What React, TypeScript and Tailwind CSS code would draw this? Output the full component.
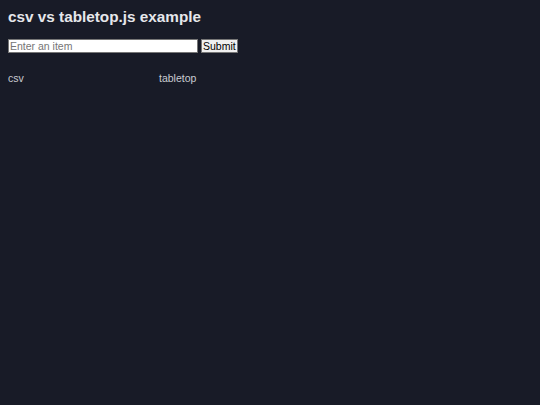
export default function App() {
  return (
    <div className="min-h-[405px] w-full bg-[#181b27] p-2 font-['Liberation_Sans',Arial,sans-serif] text-[#d4d6dc]">
      <h1 className="text-[15.3px] font-bold leading-[18px] text-[#e6e7eb]">csv vs tabletop.js example</h1>
      <div className="mt-[13px] flex items-center gap-[3px]">
        <input
          className="h-[14px] w-[190px] border border-[#767676] bg-white px-[1px] text-[10.5px] leading-[12px] text-black outline-none placeholder:text-[#757575]"
          placeholder="Enter an item"
        />
        <button className="h-[14px] border border-[#767676] bg-[#efefef] px-[1px] text-[10.5px] leading-[12px] text-black">
          Submit
        </button>
      </div>
      <div className="mt-[19px] flex text-[10.5px] leading-[12px] text-[#c9cbd2]">
        <div className="w-[151px]">csv</div>
        <div>tabletop</div>
      </div>
    </div>
  );
}
